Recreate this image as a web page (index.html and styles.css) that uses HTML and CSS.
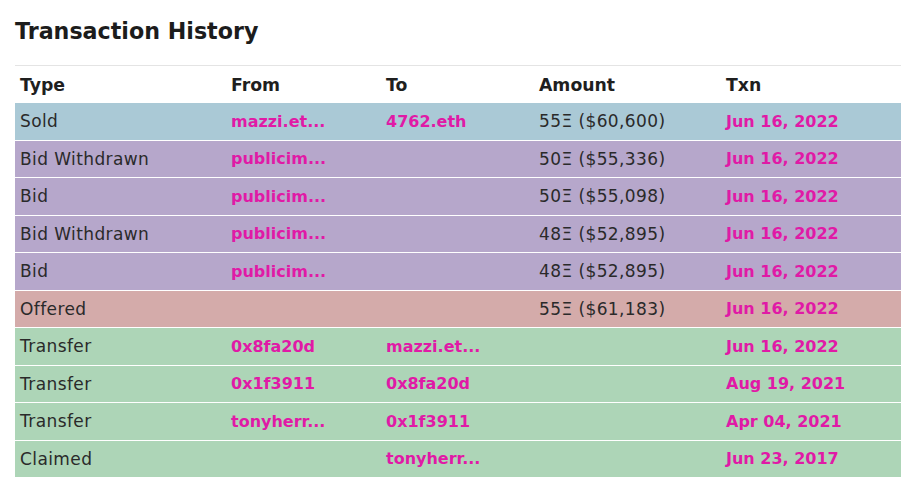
FILE: index.html
```html
<!DOCTYPE html>
<html lang="en">
<head>
<meta charset="utf-8">
<title>Transaction History</title>
<link rel="stylesheet" href="styles.css">
</head>
<body>
<div class="panel">
  <h2 class="title">Transaction History</h2>
  <table class="txn-table">
    <colgroup>
      <col class="c-type"><col class="c-from"><col class="c-to"><col class="c-amount"><col class="c-txn">
    </colgroup>
    <thead>
      <tr><th>Type</th><th>From</th><th>To</th><th>Amount</th><th>Txn</th></tr>
    </thead>
    <tbody>
      <tr class="sold"><td>Sold</td><td class="link">mazzi.et...</td><td class="link">4762.eth</td><td>55Ξ ($60,600)</td><td class="link">Jun 16, 2022</td></tr>
      <tr class="bid"><td>Bid Withdrawn</td><td class="link">publicim...</td><td></td><td>50Ξ ($55,336)</td><td class="link">Jun 16, 2022</td></tr>
      <tr class="bid"><td>Bid</td><td class="link">publicim...</td><td></td><td>50Ξ ($55,098)</td><td class="link">Jun 16, 2022</td></tr>
      <tr class="bid"><td>Bid Withdrawn</td><td class="link">publicim...</td><td></td><td>48Ξ ($52,895)</td><td class="link">Jun 16, 2022</td></tr>
      <tr class="bid"><td>Bid</td><td class="link">publicim...</td><td></td><td>48Ξ ($52,895)</td><td class="link">Jun 16, 2022</td></tr>
      <tr class="offer"><td>Offered</td><td></td><td></td><td>55Ξ ($61,183)</td><td class="link">Jun 16, 2022</td></tr>
      <tr class="transfer"><td>Transfer</td><td class="link">0x8fa20d</td><td class="link">mazzi.et...</td><td></td><td class="link">Jun 16, 2022</td></tr>
      <tr class="transfer"><td>Transfer</td><td class="link">0x1f3911</td><td class="link">0x8fa20d</td><td></td><td class="link">Aug 19, 2021</td></tr>
      <tr class="transfer"><td>Transfer</td><td class="link">tonyherr...</td><td class="link">0x1f3911</td><td></td><td class="link">Apr 04, 2021</td></tr>
      <tr class="transfer"><td>Claimed</td><td></td><td class="link">tonyherr...</td><td></td><td class="link">Jun 23, 2017</td></tr>
    </tbody>
  </table>
</div>
</body>
</html>
```
FILE: styles.css
```css
html, body {
  margin: 0;
  padding: 0;
  background: #ffffff;
}
body {
  font-family: "DejaVu Sans", "Open Sans", sans-serif;
  color: #2b2b2b;
}
.panel {
  padding: 17px 15px 0 15px;
  width: 888px;
}
.title {
  margin: 0 0 19px 0;
  font-size: 22.2px;
  line-height: 29px;
  font-weight: 700;
  color: #1c1c1c;
}
.txn-table {
  width: 886px;
  border-collapse: collapse;
  table-layout: fixed;
  font-size: 17px;
}
.c-type { width: 211px; }
.c-from { width: 155px; }
.c-to { width: 153px; }
.c-amount { width: 187px; }
.c-txn { width: 180px; }
.txn-table thead tr {
  border-top: 1px solid #e4e4e4;
}
.txn-table th {
  height: 37px;
  padding: 0 5px;
  text-align: left;
  font-weight: 700;
  font-size: 17.3px;
  color: #1f1f1f;
  vertical-align: middle;
}
.txn-table td {
  height: 36.5px;
  padding: 0 5px;
  vertical-align: middle;
  white-space: nowrap;
  overflow: hidden;
  letter-spacing: 0.4px;
  color: #2a2a2a;
}
.txn-table tbody tr {
  border-top: 1px solid rgba(255, 255, 255, 0.55);
}
.txn-table tbody tr:first-child {
  border-top: none;
}
.sold { background: #aac9d6; }
.bid { background: #b6a7cb; }
.offer { background: #d4abaa; }
.transfer { background: #add5b7; }
.txn-table td.link {
  color: #e01aa6;
  font-weight: 700;
  font-size: 16px;
  letter-spacing: 0px;
}
```
